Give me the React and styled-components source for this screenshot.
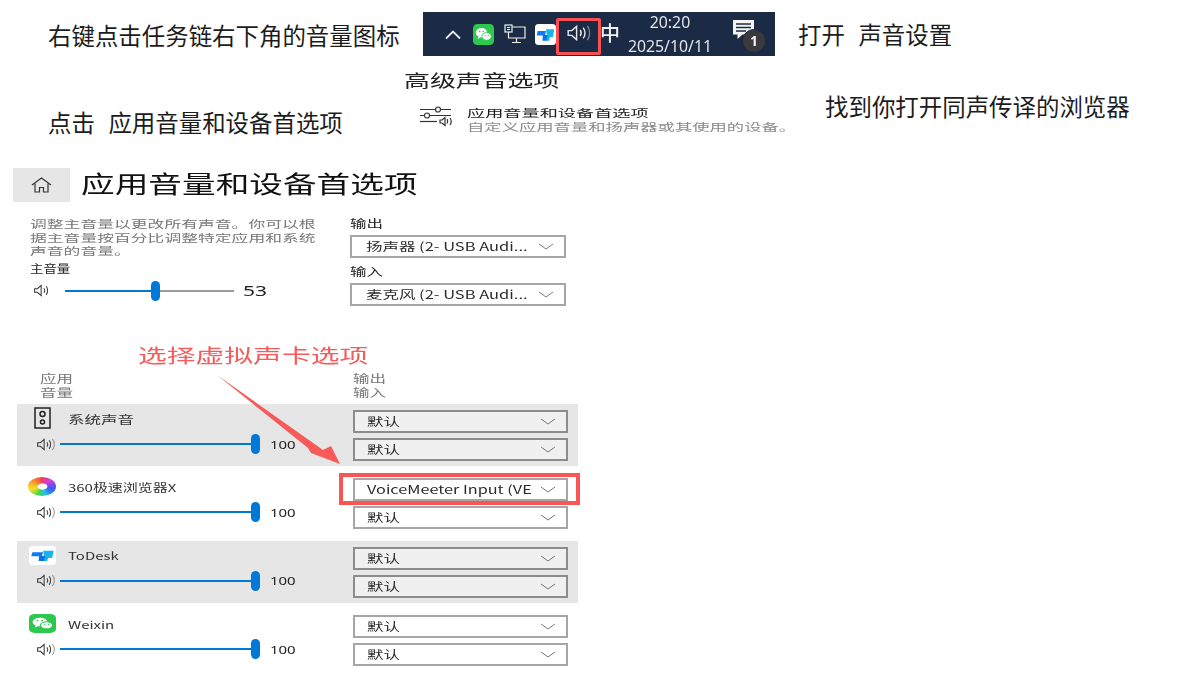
import React from 'react';
import styled, { createGlobalStyle } from 'styled-components';

const GlobalStyle = createGlobalStyle`
  html, body { margin: 0; padding: 0; background: #fff; }
  body { font-family: "Noto Sans CJK SC", "Noto Sans", sans-serif; color: #1a1a1a; }
`;

const Page = styled.div`
  position: relative;
  width: 1191px;
  height: 676px;
  overflow: hidden;
  background: #fff;
`;

const Stretch = styled.span`
  display: inline-block;
  white-space: nowrap;
  transform: scaleX(${(p) => p.$x || 1.4});
  transform-origin: left center;
`;

/* instruction strip */
const TopRow = styled.div`
  display: grid;
  grid-template-columns: 423px 352px 1fr;
  align-items: center;
  height: 44px;
  padding-top: 12px;
`;

const Note = styled.div`
  font-size: 23.45px;
  line-height: 30px;
  white-space: pre;
  word-spacing: 1.5px;
  color: #1c1c1c;
  padding-left: ${(p) => p.$left || 0}px;
  margin-top: ${(p) => p.$top || 0}px;
`;

const Taskbar = styled.div`
  display: flex;
  align-items: center;
  height: 44px;
  padding-left: 21px;
  background: #1b2a45;
  color: #f0f0f0;
  filter: blur(0.4px);
`;

const TrayIcon = styled.div`
  display: flex;
  width: ${(p) => p.$w}px;
  margin-right: ${(p) => p.$gap || 0}px;
  justify-content: center;
  align-items: center;
`;

const SpeakerBox = styled.div`
  display: flex;
  justify-content: center;
  align-items: center;
  width: 45px;
  height: 37px;
  box-sizing: border-box;
  border: 3.5px solid #f85050;
  border-radius: 2px;
  margin-top: 5px;
  padding-bottom: 7px;
`;

const ImeLabel = styled.div`
  font-size: 20px;
  font-weight: 500;
  width: 22px;
  line-height: 44px;
  margin-top: -2px;
  margin-left: -1px;
`;

const Clock = styled.div`
  width: 96px;
  text-align: center;
  font-family: "Noto Sans", sans-serif;
  font-size: 15.8px;
  line-height: 24px;
  color: #e4e6ea;
`;

const NotifyWrap = styled.div`
  position: relative;
  margin-left: 15px;
  width: 24px;
  height: 26px;
  margin-top: -4px;
`;

const Badge = styled.div`
  position: absolute;
  left: 9px;
  top: 10px;
  width: 22px;
  height: 22px;
  border-radius: 50%;
  background: #3a3a3c;
  border: 1px solid #1b2a45;
  color: #f2f2f2;
  font-family: "Noto Sans", sans-serif;
  font-weight: 700;
  font-size: 14px;
  line-height: 22px;
  text-align: center;
`;

const SecondRow = styled.div`
  display: grid;
  grid-template-columns: 404px 400px 1fr;
  height: 112px;
`;

const AdvancedCol = styled.div`
  padding-top: 13px;
  filter: blur(0.35px);
`;

const AdvancedTitle = styled.div`
  font-size: 17.5px;
  line-height: 22px;
  color: #222;
`;

const PrefLink = styled.div`
  display: flex;
  margin-top: 14px;
  margin-left: 15px;
`;

const PrefText = styled.div`
  margin-left: 14px;
`;

const PrefName = styled.div`
  font-size: 10.5px;
  line-height: 15px;
  color: #1c1c1c;
`;

const PrefSub = styled.div`
  font-size: 10.5px;
  line-height: 13px;
  color: #8a8a8a;
`;

/* settings window */
const Panel = styled.section`
  padding-left: 13px;
  filter: blur(0.35px);
`;

const PanelHead = styled.header`
  display: flex;
  align-items: center;
  height: 34px;
`;

const HomeButton = styled.div`
  display: flex;
  align-items: center;
  justify-content: center;
  width: 57px;
  height: 34px;
  background: #e6e6e6;
`;

const PanelTitle = styled.h1`
  margin: 0 0 4px 11px;
  font-size: 24.4px;
  font-weight: 400;
  line-height: 30px;
  color: #111;
`;

const Master = styled.div`
  display: grid;
  grid-template-columns: 337px 216px;
  margin-top: 14px;
`;

const MasterLeft = styled.div`
  padding-left: 17px;
`;

const Desc = styled.div`
  font-size: 10.5px;
  line-height: 13.5px;
  margin-top: 1px;
  color: #777;
`;

const VolumeLabel = styled.div`
  margin-top: 3px;
  font-size: 11px;
  line-height: 14px;
  color: #222;
`;

const SliderRow = styled.div`
  display: flex;
  align-items: center;
  height: 20px;
  margin-left: ${(p) => p.$left}px;
  margin-top: ${(p) => p.$top}px;
`;

const Track = styled.div`
  position: relative;
  width: ${(p) => p.$w}px;
  height: 2px;
  margin-left: ${(p) => p.$left}px;
  background: ${(p) => (p.$full ? '#0078d7' : '#9a9a9a')};
`;

const Fill = styled.div`
  height: 2px;
  background: #0078d7;
`;

const Thumb = styled.div`
  position: absolute;
  top: -9px;
  width: 9px;
  height: 20px;
  margin-left: -4px;
  border-radius: 5px;
  background: #0078d7;
`;

const Value = styled.div`
  margin-left: ${(p) => p.$left}px;
  font-family: "Noto Sans", sans-serif;
  font-size: ${(p) => p.$size}px;
  color: #222;
`;

const FieldLabel = styled.div`
  font-size: 11px;
  line-height: 14px;
  color: #222;
  margin-top: ${(p) => p.$top || 0}px;
`;

const SelectBox = styled.div`
  position: relative;
  display: flex;
  align-items: center;
  box-sizing: border-box;
  width: ${(p) => p.$w}px;
  height: 23px;
  margin-top: ${(p) => p.$top || 0}px;
  padding: 0 10px 0 ${(p) => p.$pad}px;
  border: 2px solid ${(p) => (p.$shaded ? '#8c8c8c' : '#a6a6a6')};
  background: ${(p) => (p.$shaded ? '#f0f0f0' : '#fff')};
  ${(p) =>
    p.$marked &&
    `
    &::after {
      content: "";
      position: absolute;
      left: -16px;
      right: -14px;
      top: -7px;
      bottom: -6px;
      border: 4px solid #f85555;
    }
  `}
`;

const SelectText = styled.div`
  flex: 1;
  overflow: hidden;
  font-size: 11.6px;
  line-height: 19px;
  color: #2a2a2a;
  margin-right: 8px;
`;

const Callout = styled.div`
  margin-top: 35px;
  padding-left: 125px;
  font-size: 19.2px;
  line-height: 28px;
  color: #f85a5a;
`;

const Mixer = styled.div`
  width: 561px;
  margin-left: 4px;
`;

const MixerHead = styled.div`
  display: grid;
  grid-template-columns: 336px 1fr;
  height: 33px;
  margin-top: 2px;
  font-size: 11px;
  line-height: 14px;
  color: #777;
`;

const HeadCell = styled.div`
  padding-left: ${(p) => p.$left}px;
`;

const AppRow = styled.div`
  display: grid;
  grid-template-columns: 336px 215px;
  box-sizing: border-box;
  height: 62px;
  margin-bottom: 6.4px;
  background: ${(p) => (p.$shaded ? '#e6e6e6' : 'transparent')};
`;

const AppLeft = styled.div`
  padding-top: 3px;
`;

const AppTitle = styled.div`
  display: flex;
  align-items: center;
  height: 23px;
  padding-left: 12px;
`;

const AppIcon = styled.div`
  display: flex;
  justify-content: center;
  width: 27px;
  margin-right: 12px;
`;

const AppName = styled.div`
  font-size: 11px;
  color: #333;
  line-height: 20px;
`;

const AppRight = styled.div`
  padding-top: 6px;
`;

const ArrowOverlay = styled.svg`
  position: absolute;
  left: 0;
  top: 0;
  pointer-events: none;
`;

const SpeakerIcon = ({ w = 20, h = 14, color = '#333', waves = 2, sw = 1.1 }) => (
  <svg width={w} height={h} viewBox="0 0 20 14" fill="none" stroke={color} strokeWidth={sw}>
    <path d="M1 5h3l4-3.500v11L4 9H1z" />
    <path d="M11 4.500c1 1.500 1 3.500 0 5" />
    <path d="M13.500 2.500c1.800 2.700 1.800 6.300 0 9" />
    {waves > 2 && <path d="M17 1c2.400 3.600 2.400 8.400 0 12" opacity="0.5" />}
  </svg>
);

const WechatIcon = ({ w, h }) => (
  <svg width={w} height={h} viewBox="0 0 24 24" preserveAspectRatio="none">
    <rect width="24" height="24" rx="5" fill="#2dc84d" />
    <ellipse cx="9.800" cy="10" rx="6.600" ry="5.400" fill="#fff" />
    <path d="M6 14l-.6 3 3.200-1.800z" fill="#fff" />
    <ellipse cx="15.600" cy="14.200" rx="5.400" ry="4.400" fill="#fff" stroke="#2dc84d" strokeWidth="1" />
    <circle cx="7.600" cy="8.600" r="0.9" fill="#2dc84d" />
    <circle cx="11.600" cy="8.600" r="0.9" fill="#2dc84d" />
    <circle cx="13.800" cy="13.400" r="0.7" fill="#2dc84d" />
    <circle cx="17.400" cy="13.400" r="0.7" fill="#2dc84d" />
  </svg>
);

const TodeskIcon = ({ w, h }) => (
  <svg width={w} height={h} viewBox="0 0 24 24" preserveAspectRatio="none">
    <rect width="24" height="24" rx="4" fill="#fff" />
    <path d="M3 8h9.500l-1 5H2z" fill="#0f7bf0" />
    <path d="M12.500 6H22l-1.500 9h-3.500l-.8 4h-3.700l1-6.500z" fill="#18b6e8" />
    <path d="M9 12.500h5.500L13.200 19H8.500z" fill="#0f6fe8" />
  </svg>
);

const NetworkIcon = () => (
  <svg width="22" height="22" viewBox="0 0 22 22" fill="none" stroke="#f0f0f0" strokeWidth="1.200">
    <rect x="1" y="2" width="7" height="7" />
    <path d="M3 4.500h3M3 6.500h3" />
    <path d="M8 4h13v11H4.500V9" />
    <path d="M12.500 15v4M8 19.500h9" />
  </svg>
);

const NotifyIcon = () => (
  <svg width="22" height="24" viewBox="0 0 22 24">
    <path d="M0 1h21v14.500H9.500L4.500 20v-4.500H0z" fill="#f4f4f4" />
    <path d="M3 5h15M3 8.500h15M3 12h10" stroke="#1b2a45" strokeWidth="1.300" />
  </svg>
);

const SliderPrefIcon = () => (
  <svg width="34" height="22" viewBox="0 0 34 22" fill="none" stroke="#333" strokeWidth="1.200">
    <path d="M1 4.500h15M22 4.500h10" />
    <circle cx="19" cy="4.500" r="2.500" />
    <path d="M1 10.500h4M11 10.500h21" />
    <circle cx="8" cy="10.500" r="2.500" />
    <path d="M1 16.500h17" />
    <path d="M21 15h2l3-2.500v8L23 18h-2z" />
    <path d="M28 14c.8 1 .8 3.500 0 4.500M31 13c1.400 2 1.400 5 0 7" />
  </svg>
);

const HomeIcon = () => (
  <svg width="21" height="16" viewBox="0 0 21 16" fill="none" stroke="#333" strokeWidth="1.200">
    <path d="M1 8l9.500-7L20 8" />
    <path d="M4 6.500V15h4.500v-4.500h4V15H17V6.500" />
  </svg>
);

const Chevron = () => (
  <svg width="16" height="7" viewBox="0 0 16 7" fill="none" stroke="#777" strokeWidth="1">
    <path d="M1 1l7 5 7-5" />
  </svg>
);

const SystemIcon = () => (
  <svg width="18" height="23" viewBox="0 0 18 23" fill="none" stroke="#222" strokeWidth="1.500">
    <rect x="1" y="1" width="15" height="20" />
    <circle cx="8.500" cy="7" r="2.500" />
    <circle cx="8.500" cy="15" r="2" />
  </svg>
);

const BrowserLogo = styled.div`
  width: 28px;
  height: 19px;
  margin-left: -2px;
  border-radius: 50%;
  filter: blur(0.7px);
  background: radial-gradient(ellipse at 52% 50%, #fff 0 20%, transparent 26%),
    conic-gradient(#f23a5a, #d63de0, #3a5cf0, #22c0e8, #45d34a, #f8e02c, #f8862c, #f23a5a);
`;

const Select = ({ w = 215, top, pad = 12, shaded, marked, scale = 1.42, children }) => (
  <SelectBox $w={w} $top={top} $pad={pad} $shaded={shaded} $marked={marked}>
    <SelectText>
      <Stretch $x={scale}>{children}</Stretch>
    </SelectText>
    <Chevron />
  </SelectBox>
);

const apps = [
  { name: '系统声音', icon: <SystemIcon />, shaded: true, x: 1.5 },
  { name: '360极速浏览器X', icon: <BrowserLogo />, x: 1.36 },
  { name: 'ToDesk', icon: <TodeskIcon w={28} h={19} />, shaded: true, x: 1.36 },
  { name: 'Weixin', icon: <WechatIcon w={28} h={19} />, x: 1.36 },
];

const AppVolume = ({ app }) => {
  const picked = app.name.startsWith('360');
  return (
    <AppRow $shaded={app.shaded}>
      <AppLeft>
        <AppTitle>
          <AppIcon>{app.icon}</AppIcon>
          <AppName>
            <Stretch $x={app.x}>{app.name}</Stretch>
          </AppName>
        </AppTitle>
        <SliderRow $left={19} $top={4}>
          <SpeakerIcon w={20} h={13} waves={3} />
          <Track $w={195} $left={4} $full>
            <Thumb style={{ left: '100%' }} />
          </Track>
          <Value $left={15} $size={11.5}>
            <Stretch $x={1.3}>100</Stretch>
          </Value>
        </SliderRow>
      </AppLeft>
      <AppRight>
        <Select shaded={app.shaded} marked={picked} scale={picked ? 1.4 : 1.42}>
          {picked ? 'VoiceMeeter Input (VE' : '默认'}
        </Select>
        <Select shaded={app.shaded} top={5}>
          默认
        </Select>
      </AppRight>
    </AppRow>
  );
};

export default function App() {
  return (
    <Page>
      <GlobalStyle />
      <TopRow>
        <Note $left={48} $top={1}>右键点击任务链右下角的音量图标</Note>
        <Taskbar>
          <TrayIcon $w={18} $gap={11}>
            <svg width="18" height="11" viewBox="0 0 18 11" fill="none" stroke="#e8e8e8" strokeWidth="1.800">
              <path d="M2 9.500L9 2.500l7 7" />
            </svg>
          </TrayIcon>
          <TrayIcon $w={21} $gap={10}>
            <WechatIcon w={21} h={21} />
          </TrayIcon>
          <TrayIcon $w={22} $gap={9}>
            <NetworkIcon />
          </TrayIcon>
          <TrayIcon $w={21}>
            <TodeskIcon w={21} h={21} />
          </TrayIcon>
          <SpeakerBox>
            <SpeakerIcon w={24} h={18} color="#e6e6e6" waves={3} sw={1.2} />
          </SpeakerBox>
          <ImeLabel>中</ImeLabel>
          <Clock>
            <div>20:20</div>
            <div>2025/10/11</div>
          </Clock>
          <NotifyWrap>
            <NotifyIcon />
            <Badge>1</Badge>
          </NotifyWrap>
        </Taskbar>
        <Note $left={23} $top={-1}>打开  声音设置</Note>
      </TopRow>

      <SecondRow>
        <Note $left={48} $top={51}>点击  应用音量和设备首选项</Note>
        <AdvancedCol>
          <AdvancedTitle>
            <Stretch $x={1.48}>高级声音选项</Stretch>
          </AdvancedTitle>
          <PrefLink>
            <SliderPrefIcon />
            <PrefText>
              <PrefName>
                <Stretch $x={1.73}>应用音量和设备首选项</Stretch>
              </PrefName>
              <PrefSub>
                <Stretch $x={1.65}>自定义应用音量和扬声器或其使用的设备。</Stretch>
              </PrefSub>
            </PrefText>
          </PrefLink>
        </AdvancedCol>
        <Note $left={21} $top={35}>找到你打开同声传译的浏览器</Note>
      </SecondRow>

      <Panel>
        <PanelHead>
          <HomeButton>
            <HomeIcon />
          </HomeButton>
          <PanelTitle>
            <Stretch $x={1.38}>应用音量和设备首选项</Stretch>
          </PanelTitle>
        </PanelHead>

        <Master>
          <MasterLeft>
            <Desc>
              <Stretch $x={1.6}>调整主音量以更改所有声音。你可以根</Stretch>
              <br />
              <Stretch $x={1.6}>据主音量按百分比调整特定应用和系统</Stretch>
              <br />
              <Stretch $x={1.6}>声音的音量。</Stretch>
            </Desc>
            <VolumeLabel>
              <Stretch $x={1.22}>主音量</Stretch>
            </VolumeLabel>
            <SliderRow $left={3} $top={6}>
              <SpeakerIcon w={20} h={13} />
              <Track $w={169} $left={12}>
                <Fill style={{ width: '53%' }} />
                <Thumb style={{ left: '53%' }} />
              </Track>
              <Value $left={9} $size={14}>
                <Stretch $x={1.5}>53</Stretch>
              </Value>
            </SliderRow>
          </MasterLeft>
          <div>
            <FieldLabel>
              <Stretch $x={1.5}>输出</Stretch>
            </FieldLabel>
            <Select w={216} top={5} pad={14} scale={1.42}>扬声器 (2- USB Audi...</Select>
            <FieldLabel $top={6}>
              <Stretch $x={1.5}>输入</Stretch>
            </FieldLabel>
            <Select w={216} top={5} pad={14} scale={1.42}>麦克风 (2- USB Audi...</Select>
          </div>
        </Master>

        <Callout>
          <Stretch $x={1.5}>选择虚拟声卡选项</Stretch>
        </Callout>

        <Mixer>
          <MixerHead>
            <HeadCell $left={23}>
              <Stretch $x={1.5}>应用</Stretch>
              <br />
              <Stretch $x={1.5}>音量</Stretch>
            </HeadCell>
            <HeadCell $left={0}>
              <Stretch $x={1.5}>输出</Stretch>
              <br />
              <Stretch $x={1.5}>输入</Stretch>
            </HeadCell>
          </MixerHead>
          {apps.map((app) => (
            <AppVolume key={app.name} app={app} />
          ))}
        </Mixer>
      </Panel>

      <ArrowOverlay width="1191" height="676" viewBox="0 0 1191 676">
        <polygon points="217,375 323,450 331,446 340,464 311,453 308,448" fill="#f85a5a" />
      </ArrowOverlay>
    </Page>
  );
}
